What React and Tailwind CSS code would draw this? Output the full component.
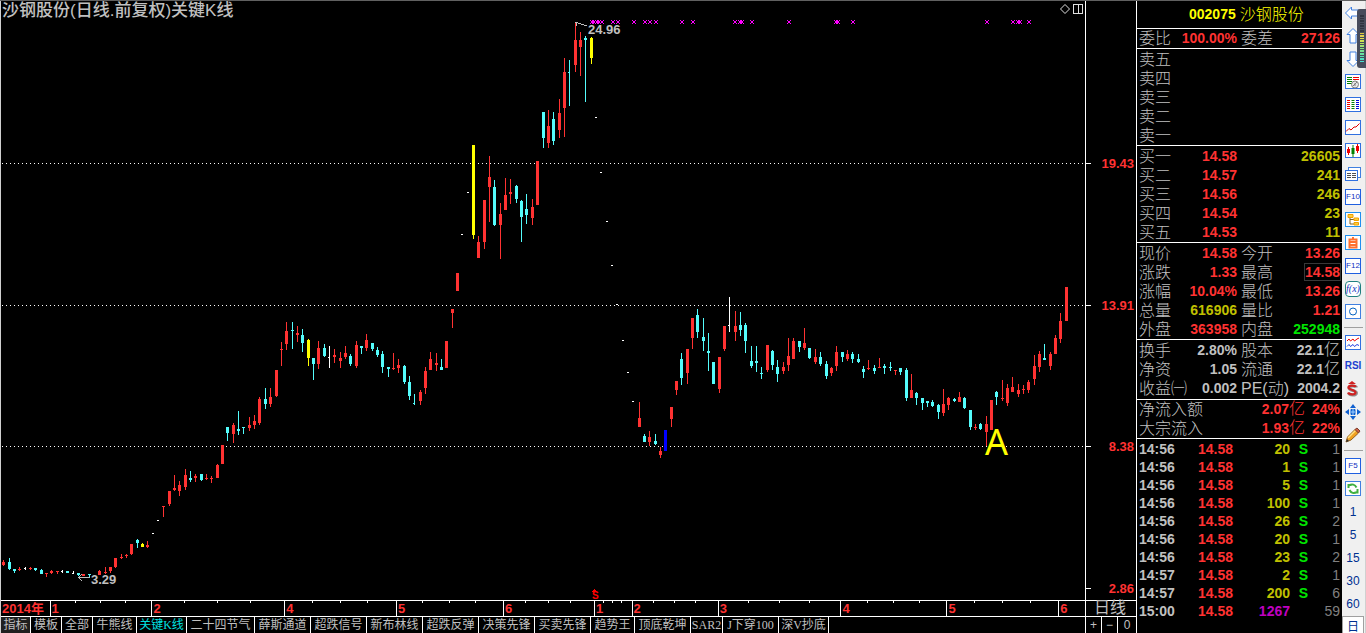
import React, { useState } from 'react';
import clsx from 'clsx';

const PLOT_LEFT = 1;
const PLOT_TOP = 1;
const PLOT_WIDTH = 1084;
const PLOT_HEIGHT = 599;

const COLORS = {
  r: '#ff3232',
  c: '#54fcfc',
  y: '#ffff00',
  w: '#ffffff',
  b: '#0000ff',
};

// x, high, body top, body bottom, low, colour
const CANDLES = [
  [3, 560, 562, 565, 566, 'r'], [9, 558, 562, 569, 570, 'c'], [14, 569, 569, 571, 573, 'c'], [19, 567, 569, 570, 571, 'r'],
  [30, 567, 568, 569, 570, 'r'], [35, 568, 568, 570, 571, 'c'], [41, 569, 570, 574, 574, 'c'], [46, 573, 573, 574, 577, 'r'],
  [51, 570, 571, 573, 574, 'r'], [57, 571, 571, 572, 574, 'r'], [67, 571, 571, 573, 573, 'c'], [78, 573, 573, 575, 576, 'c'],
  [83, 574, 574, 576, 576, 'r'], [89, 574, 574, 575, 577, 'c'], [99, 570, 571, 575, 575, 'r'], [105, 567, 572, 573, 574, 'r'],
  [110, 567, 567, 571, 573, 'r'], [115, 558, 558, 567, 568, 'r'], [121, 554, 557, 558, 559, 'r'], [126, 554, 555, 556, 558, 'r'],
  [131, 544, 544, 554, 555, 'r'], [137, 539, 540, 543, 548, 'c'], [142, 543, 544, 547, 547, 'y'], [147, 541, 545, 547, 548, 'r'],
  [163, 506, 506, 507, 517, 'r'], [169, 491, 491, 504, 506, 'r'], [174, 475, 488, 490, 491, 'r'], [179, 481, 485, 491, 496, 'r'],
  [185, 469, 475, 487, 490, 'r'], [190, 471, 478, 480, 482, 'c'], [195, 474, 476, 478, 482, 'r'], [201, 474, 474, 480, 481, 'c'],
  [206, 474, 478, 479, 480, 'r'], [211, 476, 478, 479, 483, 'r'], [217, 464, 465, 478, 478, 'r'], [222, 445, 445, 464, 464, 'r'],
  [227, 427, 427, 433, 441, 'c'], [233, 423, 425, 434, 443, 'r'], [238, 411, 429, 431, 435, 'c'], [243, 427, 427, 428, 434, 'c'],
  [249, 417, 425, 428, 431, 'r'], [254, 415, 421, 425, 429, 'r'], [259, 397, 399, 423, 425, 'r'], [265, 388, 399, 404, 409, 'c'],
  [270, 388, 397, 404, 407, 'r'], [276, 370, 370, 396, 397, 'r'], [281, 342, 349, 350, 366, 'r'], [286, 322, 331, 344, 350, 'r'],
  [292, 322, 330, 331, 349, 'c'], [297, 326, 333, 335, 342, 'r'], [302, 329, 335, 343, 352, 'c'], [308, 339, 340, 358, 366, 'y'],
  [313, 358, 358, 364, 380, 'c'], [318, 341, 348, 364, 369, 'r'], [324, 344, 348, 356, 357, 'c'], [334, 349, 355, 357, 363, 'r'],
  [340, 352, 358, 361, 368, 'r'], [345, 346, 353, 357, 359, 'r'], [350, 354, 356, 364, 366, 'c'], [356, 341, 345, 366, 368, 'r'],
  [361, 346, 346, 348, 354, 'c'], [366, 334, 340, 348, 351, 'r'], [372, 343, 343, 349, 351, 'c'], [377, 347, 350, 355, 357, 'c'],
  [382, 351, 354, 367, 373, 'c'], [388, 367, 367, 369, 377, 'c'], [393, 353, 368, 369, 370, 'r'], [398, 359, 365, 368, 373, 'r'],
  [404, 365, 366, 382, 384, 'c'], [409, 376, 382, 396, 400, 'c'], [420, 390, 392, 401, 405, 'r'], [425, 367, 371, 388, 394, 'r'],
  [430, 352, 359, 370, 370, 'r'], [436, 353, 363, 365, 371, 'r'], [441, 359, 367, 370, 370, 'c'], [446, 341, 341, 368, 368, 'r'],
  [452, 309, 309, 313, 328, 'r'], [457, 273, 273, 291, 291, 'r'], [473, 145, 145, 235, 239, 'y'], [478, 236, 242, 258, 258, 'r'],
  [484, 200, 200, 242, 249, 'r'], [489, 156, 177, 187, 222, 'r'], [494, 180, 187, 225, 226, 'c'], [500, 203, 214, 225, 259, 'r'],
  [505, 178, 195, 210, 210, 'r'], [510, 179, 192, 194, 204, 'r'], [516, 185, 186, 199, 203, 'c'], [521, 200, 201, 217, 242, 'c'],
  [526, 194, 209, 215, 224, 'c'], [532, 199, 207, 218, 225, 'r'], [537, 161, 161, 205, 205, 'r'], [543, 112, 112, 138, 148, 'c'],
  [548, 110, 126, 143, 148, 'r'], [553, 112, 119, 141, 145, 'c'], [559, 99, 113, 130, 138, 'r'], [564, 58, 72, 108, 137, 'r'],
  [575, 22, 40, 65, 72, 'r'], [580, 32, 40, 47, 76, 'r'], [585, 36, 38, 40, 102, 'c'], [591, 37, 38, 58, 64, 'y'],
  [639, 402, 418, 427, 427, 'r'], [644, 434, 436, 442, 442, 'c'], [649, 431, 437, 442, 446, 'r'], [655, 434, 441, 444, 445, 'c'],
  [660, 447, 451, 455, 458, 'r'], [665, 430, 430, 451, 451, 'b'], [671, 407, 407, 419, 427, 'r'], [676, 381, 381, 390, 395, 'r'],
  [681, 353, 359, 378, 385, 'c'], [687, 349, 349, 373, 384, 'r'], [692, 318, 318, 338, 349, 'r'], [697, 309, 315, 332, 338, 'c'],
  [703, 318, 337, 341, 351, 'c'], [708, 333, 351, 353, 371, 'c'], [713, 362, 362, 384, 384, 'c'], [719, 357, 357, 389, 393, 'r'],
  [724, 326, 326, 349, 351, 'r'], [735, 311, 326, 332, 341, 'r'], [740, 312, 325, 330, 336, 'c'], [745, 323, 325, 341, 353, 'c'],
  [751, 346, 361, 366, 368, 'c'], [756, 346, 361, 363, 372, 'c'], [761, 367, 373, 374, 379, 'c'], [767, 345, 345, 370, 372, 'r'],
  [772, 350, 351, 365, 370, 'c'], [777, 360, 367, 374, 382, 'c'], [783, 362, 367, 371, 374, 'r'], [788, 338, 356, 365, 371, 'r'],
  [793, 338, 341, 359, 359, 'r'], [799, 341, 341, 347, 352, 'c'], [804, 328, 343, 348, 350, 'r'], [809, 348, 348, 358, 359, 'c'],
  [815, 349, 357, 362, 364, 'r'], [820, 352, 357, 364, 366, 'c'], [826, 361, 364, 376, 379, 'c'], [831, 367, 368, 373, 376, 'r'],
  [836, 346, 352, 366, 371, 'r'], [842, 352, 352, 357, 362, 'c'], [847, 350, 354, 359, 361, 'r'], [852, 352, 354, 359, 363, 'c'],
  [858, 354, 359, 362, 363, 'c'], [863, 366, 369, 372, 378, 'c'], [868, 360, 368, 369, 370, 'r'], [874, 365, 368, 371, 374, 'c'],
  [879, 358, 367, 368, 368, 'r'], [884, 364, 366, 368, 374, 'c'], [890, 362, 367, 368, 371, 'c'], [895, 370, 370, 371, 375, 'r'],
  [900, 368, 368, 372, 375, 'c'], [906, 368, 370, 398, 401, 'c'], [911, 374, 390, 398, 398, 'r'], [916, 392, 393, 398, 405, 'c'],
  [922, 398, 398, 403, 410, 'c'], [927, 401, 401, 403, 407, 'c'], [932, 400, 402, 406, 407, 'c'], [938, 404, 405, 412, 419, 'c'],
  [943, 389, 404, 413, 416, 'r'], [948, 397, 398, 405, 410, 'r'], [954, 398, 399, 401, 402, 'c'], [959, 392, 397, 402, 402, 'r'],
  [964, 397, 398, 408, 409, 'c'], [970, 410, 410, 427, 430, 'c'], [975, 424, 427, 428, 430, 'r'], [980, 423, 424, 429, 430, 'c'],
  [986, 416, 424, 432, 446, 'r'], [991, 400, 400, 430, 430, 'r'], [996, 391, 392, 397, 405, 'c'], [1002, 380, 398, 399, 401, 'r'],
  [1007, 384, 388, 403, 406, 'r'], [1012, 377, 387, 392, 392, 'r'], [1018, 384, 390, 394, 397, 'r'], [1023, 385, 389, 390, 394, 'r'],
  [1028, 380, 382, 390, 393, 'r'], [1034, 355, 366, 379, 385, 'r'], [1039, 351, 354, 367, 372, 'r'], [1044, 344, 358, 360, 360, 'c'],
  [1050, 352, 354, 366, 370, 'r'], [1055, 335, 338, 354, 354, 'r'], [1060, 313, 321, 339, 343, 'r'], [1066, 287, 287, 321, 321, 'r'],
];

// days that closed at the open: a wick with a tick on its left (x, high, close, low, colour)
const DOJI = [
  [25, 567, 568, 570, 'w'], [62, 570, 571, 573, 'w'], [73, 571, 573, 574, 'w'], [329, 346, 357, 368, 'w'],
  [414, 394, 403, 405, 'c'], [569, 60, 72, 106, 'c'], [729, 297, 325, 332, 'w'],
];

// limit days with a single price
const DASHES = [
  [153, 533], [158, 520], [462, 234], [468, 192], [596, 117], [601, 172], [607, 221], [612, 265],
  [617, 304], [623, 340], [628, 372], [633, 401],
];

const CROSSES = [
  592, 594, 597, 599, 602, 613, 618, 634, 645, 650, 656, 682, 693, 735, 740, 742, 752, 789,
  836, 838, 853, 987, 1013, 1018, 1020, 1029,
];

const GRID_LINES = [163, 305, 446];

const NOTES = [
  { text: '24.96', x: 588, y: 22, className: 'text-[13px] leading-4 font-bold text-[#c0c0c0]' },
  { text: '3.29', x: 91, y: 572, className: 'text-[13px] leading-4 font-bold text-[#c0c0c0]' },
  { text: 'S', x: 592, y: 591, className: 'text-[10px] leading-[10px] font-bold text-[#ff0000]' },
  { text: 'A', x: 985, y: 422, className: "font-['Noto_Sans'] text-[36px] leading-10 text-[#ffff00]" },
];

const PRICE_BANDS = [
  { label: '19.43', size: 163 },
  { label: '13.91', size: 142 },
  { label: '8.38', size: 141 },
  { label: '2.86', size: 142 },
];

const MONTHS = [
  { label: '2014年', size: 49, first: true },
  { label: '1', size: 102, ticks: true },
  { label: '2', size: 133, ticks: true },
  { label: '4', size: 112, ticks: true },
  { label: '5', size: 107, ticks: true },
  { label: '6', size: 91, ticks: true },
  { label: '1', size: 37, ticks: true },
  { label: '2', size: 86, ticks: true },
  { label: '3', size: 123, ticks: true },
  { label: '4', size: 106, ticks: true },
  { label: '5', size: 112, ticks: true },
  { label: '6', size: 26 },
];

const TABS = [
  ['指标', 'w-[30px] bg-[#202020]'],
  ['模板', 'w-[31px]'],
  ['全部', 'w-[31px]'],
  ['牛熊线', 'w-[44px]'],
  ['关键K线', 'w-[50px]'],
  ['二十四节气', 'w-[68px]'],
  ['薛斯通道', 'w-[56px]'],
  ['超跌信号', 'w-[56px]'],
  ['新布林线', 'w-[56px]'],
  ['超跌反弹', 'w-[56px]'],
  ['决策先锋', 'w-[56px]'],
  ['买卖先锋', 'w-[56px]'],
  ['趋势王', 'w-[44px]'],
  ['顶底乾坤', 'w-[56px]'],
  ['SAR2', 'w-[32px]'],
  ['J下穿100', 'w-[56px]'],
  ['深V抄底', 'w-[50px]'],
];

const SELLS = ['卖五', '卖四', '卖三', '卖二', '卖一'];

const BUYS = [
  ['买一', '14.58', '26605'],
  ['买二', '14.57', '241'],
  ['买三', '14.56', '246'],
  ['买四', '14.54', '23'],
  ['买五', '14.53', '11'],
];

const RED = 'text-[#ff3232]';
const GRAY = 'text-[#c0c0c0]';
const OLIVE = 'text-[#c0c000]';
const GREEN = 'text-[#00e600]';

const ORDER_RATIO = [['委比', '100.00%', RED, '委差', '27126', RED]];

const PRICES = [
  ['现价', '14.58', RED, '今开', '13.26', RED],
  ['涨跌', '1.33', RED, '最高', '14.58', RED, true],
  ['涨幅', '10.04%', RED, '最低', '13.26', RED],
  ['总量', '616906', OLIVE, '量比', '1.21', RED],
  ['外盘', '363958', RED, '内盘', '252948', GREEN],
];

const FUNDAMENTALS = [
  ['换手', '2.80%', GRAY, '股本', '22.1亿', GRAY],
  ['净资', '1.05', GRAY, '流通', '22.1亿', GRAY],
  ['收益㈠', '0.002', GRAY, 'PE(动)', '2004.2', GRAY],
];

const FLOWS = [
  ['净流入额', '2.07亿', '24%'],
  ['大宗流入', '1.93亿', '22%'],
];

const TRADES = [
  ['14:56', '14.58', '20', 'S', '1'],
  ['14:56', '14.58', '1', 'S', '1'],
  ['14:56', '14.58', '5', 'S', '1'],
  ['14:56', '14.58', '100', 'S', '1'],
  ['14:56', '14.58', '26', 'S', '2'],
  ['14:56', '14.58', '20', 'S', '1'],
  ['14:56', '14.58', '23', 'S', '2'],
  ['14:57', '14.58', '2', 'S', '1'],
  ['14:57', '14.58', '200', 'S', '6'],
  ['15:00', '14.58', '1267', '', '59'],
];

const CandleChart = () => (
  <svg
    className="block min-h-0 w-full flex-1"
    viewBox={`${PLOT_LEFT} ${PLOT_TOP} ${PLOT_WIDTH} ${PLOT_HEIGHT}`}
    preserveAspectRatio="none"
    shapeRendering="crispEdges"
  >
    {GRID_LINES.map((y) => (
      <line key={y} x1="2" x2="1085" y1={y + 0.5} y2={y + 0.5} stroke="#fff" strokeDasharray="1 3" />
    ))}
    {CANDLES.map(([x, high, top, bottom, low, color]) => (
      <g key={x} fill={COLORS[color]}>
        <rect x={x} y={high} width="1" height={low - high} />
        <rect x={x - 1} y={top} width="3" height={bottom - top} />
      </g>
    ))}
    {DOJI.map(([x, high, close, low, color]) => (
      <g key={x} fill={COLORS[color]}>
        <rect x={x} y={high} width="1" height={low - high} />
        <rect x={x - 1} y={close} width="1" height="1" />
      </g>
    ))}
    {DASHES.map(([x, y]) => (
      <rect key={x} x={x - 1} y={y} width="2" height="1" fill="#fff" />
    ))}
    {CROSSES.map((x) => (
      <path
        key={x}
        d={`M${x - 2} 20h1v1h-1z m3 0h1v1h-1z m-2 1h2v2h-2z m-1 2h1v1h-1z m3 0h1v1h-1z`}
        fill="#ff00ff"
      />
    ))}
    <path d="M575 22.5h3M576.5 23v3M578 23.5h3M581 24.5h3M584 25.5h3" stroke="#c0c0c0" fill="none" />
    <path d="M78 577.5h12M79.5 576v3M80.5 575v1M80.5 579v1M81.5 580v1M81.5 574v1" stroke="#c0c0c0" fill="none" />
    <path d="M594 589h1v1h1v1h1v1h-5v-1h1v-1h1z" fill="#ff0000" />
  </svg>
);

const Plot = () => (
  <div className="relative flex min-w-0 flex-1 flex-col">
    <CandleChart />
    <div className="absolute inset-x-0 top-0 flex items-start justify-between pr-px">
      <h1 className="pl-px text-[17px] leading-5 font-medium text-[#c0c0c0]">沙钢股份(日线.前复权)关键K线</h1>
      <svg className="mt-[2px] h-[12px] w-[26px]" viewBox="0 0 26 12" fill="none" stroke="#e0e0e0">
        <path d="M7 1.5L11.5 6L7 10.5L2.5 6z" />
        <path d="M15.500 1.500h9v9h-9zM20.500 1.500v9" shapeRendering="crispEdges" />
      </svg>
    </div>
    {NOTES.map((note) => (
      <span
        key={note.text}
        className={clsx('absolute', note.className)}
        style={{
          left: `${((note.x - PLOT_LEFT) / PLOT_WIDTH) * 100}%`,
          top: `${((note.y - PLOT_TOP) / PLOT_HEIGHT) * 100}%`,
        }}
      >
        {note.text}
      </span>
    ))}
  </div>
);

const PriceAxis = () => (
  <div className="flex w-[51px] shrink-0 flex-col border-l border-white">
    {PRICE_BANDS.map((band) => (
      <div key={band.label} className="flex basis-0 items-end justify-between pr-[2px]" style={{ flexGrow: band.size }}>
        <span className="h-px w-[5px] bg-white" />
        <span className="-mb-2 text-[13px] leading-4 font-bold text-[#ff3232]">{band.label}</span>
      </div>
    ))}
    <div className="grow-[11] basis-0" />
  </div>
);

const TimeAxis = () => (
  <div className="flex h-4 shrink-0 border-t border-white">
    <div className="flex min-w-0 flex-1">
      {MONTHS.map((month, i) => (
        <div
          key={i}
          className={clsx('relative flex basis-0', !month.first && 'border-l border-white')}
          style={{ flexGrow: month.size }}
        >
          {month.ticks && (
            <div className="grid h-[2px] w-full grid-cols-4 divide-x divide-white">
              <i />
              <i />
              <i />
              <i />
            </div>
          )}
          <span className="absolute top-0 left-0 pl-px text-[13px] leading-4 font-bold whitespace-nowrap text-[#ff3232]">
            {month.label}
          </span>
        </div>
      ))}
    </div>
    <div className="w-[51px] shrink-0 border-l border-white pl-2 text-base leading-[14px] text-[#c0c0c0]">日线</div>
  </div>
);

const IndicatorTabs = () => {
  const [active, setActive] = useState('关键K线');

  return (
    <div className="flex h-[17px] shrink-0 border-t border-white text-[12px] leading-4">
      <div className="flex min-w-0 flex-1 overflow-hidden font-['Liberation_Serif','Noto_Sans_CJK_SC',serif]">
        {TABS.map(([label, width]) => (
          <button
            key={label}
            onClick={() => setActive(label)}
            className={clsx(
              'shrink-0 border-r border-white text-center whitespace-nowrap',
              width,
              active === label ? 'text-[#00e0e0]' : 'text-[#c0c0c0]'
            )}
          >
            {label}
          </button>
        ))}
      </div>
      <div className="grid w-[51px] shrink-0 grid-cols-[16px_16px_1fr] divide-x divide-white border-l border-white text-[#c0c0c0]">
        <button>+</button>
        <button>−</button>
        <button>0</button>
      </div>
    </div>
  );
};

const Value = ({ text }) =>
  text.endsWith('亿') ? (
    <>
      {text.slice(0, -1)}
      <span className="text-base leading-4 font-light">亿</span>
    </>
  ) : (
    text
  );

const label = 'p-0 text-left text-base leading-[19px] font-light whitespace-nowrap text-[#c0c0c0]';
const value = 'p-0 text-right text-[14px] leading-[19px] font-bold whitespace-nowrap';

const PairTable = ({ rows }) => (
  <table className="w-full table-fixed border-collapse">
    <tbody>
      {rows.map(([name, amount, color, name2, amount2, color2, boxed]) => (
        <tr key={name} className="h-[19px]">
          <th className={clsx(label, 'w-[38px]')}>{name}</th>
          <td className={clsx(value, color, 'w-[60px]')}>{amount}</td>
          <th className={clsx(label, 'w-[48px] pl-1')}>{name2}</th>
          <td className={clsx(value, color2)}>
            {boxed ? (
              <span className="outline outline-[#383838]">{amount2}</span>
            ) : (
              <Value text={amount2} />
            )}
          </td>
        </tr>
      ))}
    </tbody>
  </table>
);

const QuotePanel = () => (
  <aside className="w-[206px] shrink-0 divide-y divide-white border-l border-white *:px-[2px]">
    <h2 className="flex h-7 items-center gap-1 text-[#ffff00]">
      <span className="pl-[50px] text-[14px] font-bold">002075</span>
      <span className="text-base font-light">沙钢股份</span>
    </h2>
    <div>
      <PairTable rows={ORDER_RATIO} />
    </div>
    <div className="pt-px">
      <table className="w-full border-collapse">
        <tbody>
          {SELLS.map((name) => (
            <tr key={name} className="h-[19px]">
              <th className={label}>{name}</th>
            </tr>
          ))}
        </tbody>
      </table>
    </div>
    <div className="pt-px">
      <table className="w-full table-fixed border-collapse">
        <tbody>
          {BUYS.map(([name, price, volume]) => (
            <tr key={name} className="h-[19px]">
              <th className={clsx(label, 'w-[38px]')}>{name}</th>
              <td className={clsx(value, RED, 'w-[60px]')}>{price}</td>
              <td className={clsx(value, OLIVE)}>{volume}</td>
            </tr>
          ))}
        </tbody>
      </table>
    </div>
    <div className="pt-px">
      <PairTable rows={PRICES} />
    </div>
    <div className="py-px">
      <PairTable rows={FUNDAMENTALS} />
    </div>
    <div>
      <table className="w-full table-fixed border-collapse">
        <tbody>
          {FLOWS.map(([name, amount, percent]) => (
            <tr key={name} className="h-[19px]">
              <th className={clsx(label, 'w-[100px]')}>{name}</th>
              <td className={clsx(value, RED, 'w-[66px]')}>
                <Value text={amount} />
              </td>
              <td className={clsx(value, RED)}>{percent}</td>
            </tr>
          ))}
        </tbody>
      </table>
    </div>
    <div className="pt-px">
      <table className="w-full table-fixed border-collapse text-right text-[14px] leading-[18px] font-bold">
        <tbody>
          {TRADES.map(([time, price, volume, side, count], i) => (
            <tr key={i} className="h-[18px]">
              <td className="w-[44px] p-0 text-left text-[#c0c0c0]">{time}</td>
              <td className="w-[50px] p-0 text-[#ff3232]">{price}</td>
              <td className={clsx('w-[57px] p-0', side ? OLIVE : 'text-[#c000c0]')}>{volume}</td>
              <td className="w-[18px] p-0 text-[#00e600]">{side}</td>
              <td className="p-0 font-normal text-[#808080]">{count}</td>
            </tr>
          ))}
        </tbody>
      </table>
    </div>
  </aside>
);

const Icon = ({ children, frame }) => (
  <svg className="h-4 w-4" viewBox="0 0 16 16" fill="none">
    {frame && <rect x="0.5" y="0.5" width="15" height="14" fill="#fff" stroke={frame} />}
    {children}
  </svg>
);

const Boxed = ({ children }) => (
  <span className="flex h-4 w-4 items-center justify-center border border-[#2060e0] bg-white text-[8px] leading-3 font-medium text-[#1030c0]">
    {children}
  </span>
);

const TOOLS = [
  { name: '后退', icon: <Icon><path d="M0.500 8L6.500 2V5H15V11H6.500V14z" fill="#fff" stroke="#4080e0" /></Icon> },
  { name: '上翻', icon: <Icon><path d="M8 0.500L14 6.500H11V15H5V6.500H2z" fill="#fff" stroke="#4080e0" /></Icon> },
  { name: '下翻', icon: <Icon><path d="M8 15.500L2 9.500H5V1H11V9.500H14z" fill="#fff" stroke="#4080e0" /></Icon> },
  {
    name: '报价',
    icon: (
      <Icon frame="#3070e0">
        <path d="M2 3.500h5M2 5.500h5M2 7.500h5M2 9.500h5" stroke="#008000" />
        <path d="M8 3.500h6M8 5.500h6" stroke="#f00000" />
        <circle cx="10" cy="10.500" r="3.500" fill="#e8e8e8" stroke="#808080" />
        <path d="M8 12l4-4M10 9v3" stroke="#808080" />
      </Icon>
    ),
  },
  {
    name: '列表',
    icon: (
      <Icon frame="#3070e0">
        <path d="M2 3.500h3M2 5.500h3M2 7.500h3M2 9.500h3M2 11.500h3" stroke="#f00000" />
        <path d="M6.500 3.500h3M6.500 5.500h3M6.500 7.500h3M6.500 9.500h3M6.500 11.500h3" stroke="#008000" />
        <path d="M11 3.500h3M11 5.500h3M11 7.500h3M11 9.500h3M11 11.500h3" stroke="#0000e0" />
      </Icon>
    ),
  },
  { name: '分时', icon: <Icon frame="#3070e0"><path d="M1 11.500L4 8.500L6 10L9 7H11L14.500 3.500" stroke="#e00000" /></Icon> },
  {
    name: 'K线',
    icon: (
      <Icon frame="#3070e0">
        <path d="M3.500 4v8M12.500 1v9" stroke="#f00000" />
        <path d="M2 6h3v4H2zM11 3h3v5h-3z" fill="#f00000" />
        <path d="M8 2v12" stroke="#008000" />
        <path d="M6.500 5h3v6h-3z" fill="#008000" />
      </Icon>
    ),
  },
  {
    name: '资讯',
    icon: (
      <Icon>
        <rect x="3.500" y="1.500" width="12" height="10" fill="#fff" stroke="#4080e0" />
        <rect x="0.500" y="4.500" width="12" height="10" fill="#fff" stroke="#3070e0" />
        <path d="M2 7.500h4M7 7.500h4M2 9.500h4M7 9.500h4M2 11.500h4M7 11.500h4" stroke="#505050" />
      </Icon>
    ),
  },
  { name: 'F10', icon: <Boxed>F10</Boxed> },
  {
    name: '板块',
    icon: (
      <Icon frame="#2090f0">
        <path d="M5 5v7h4M5 7.500h4" stroke="#806020" />
        <path d="M3 2.500h5v3H3zM9 6h4.500v2.500H9zM9 10.500h4.500V13H9z" fill="#ffd040" stroke="#f0a000" />
      </Icon>
    ),
  },
  {
    name: '自选',
    icon: (
      <Icon frame="#2090f0">
        <path d="M4.500 4.500h7v8h-7zM4.500 7h7M4.500 10h7M8 2v2" stroke="#ff7030" strokeWidth="2" />
      </Icon>
    ),
  },
  { name: 'F12', icon: <Boxed>F12</Boxed> },
  {
    name: '公式',
    icon: (
      <span className="flex h-4 w-4 items-center justify-center rounded-[4px] border border-[#208080] bg-white font-['Liberation_Serif',serif] text-[10px] leading-3 text-[#1030c0] italic">
        f(x)
      </span>
    ),
  },
  { name: '圆', icon: <Icon frame="#4080e0"><circle cx="8" cy="7.500" r="3.500" stroke="#0060c0" /></Icon> },
  null,
  {
    name: '叠加',
    icon: (
      <Icon frame="#3070e0">
        <path d="M2 6l2-2 1.500 2L8 4l1.500 2L12 4l2-1" stroke="#f00000" />
        <path d="M2 11.500l2-2 1.500 2L8 9.500l1.500 2L12 9.500l2 1" stroke="#2040e0" />
      </Icon>
    ),
  },
  { name: 'RSI', icon: <span className="text-[10px] font-bold text-[#2040d0]">RSI</span> },
  {
    name: '买卖点',
    icon: (
      <Icon>
        <path d="M7 0l4 3H3z" fill="#d02020" />
        <path d="M11.500 6.500C11 4.500 4 4 4 7s7.500 2 7.500 5-7 2.500-8 0" stroke="#909090" strokeWidth="3" />
        <path d="M10.500 6C10 4 3.500 4 3.500 6.500s7 2 7 5-6.500 2-7.500 0" stroke="#d02020" strokeWidth="2.200" />
      </Icon>
    ),
  },
  {
    name: '移动',
    icon: (
      <Icon>
        <path d="M8 0l3 4H5zM8 16l3-4H5zM0 8l4-3v6zM16 8l-4-3v6z" fill="#1060d0" />
        <path d="M6 5.500h4v5H6zM5 8h6" fill="#1060d0" stroke="#1060d0" />
        <path d="M8 5v6M5 8h6" stroke="#a0d0ff" />
      </Icon>
    ),
  },
  {
    name: '画线',
    icon: (
      <Icon>
        <path d="M1 15l1.500-5L10 2.500l3.500 3.500L6 13z" fill="#f0a020" stroke="#906020" />
        <path d="M3 11l7.500-7.500" stroke="#ffe080" strokeWidth="1.500" />
        <path d="M10 2.500L12 1l3 3-1.500 2z" fill="#d06040" stroke="#804030" />
        <path d="M1 15l1-3 2 2z" fill="#303030" />
      </Icon>
    ),
  },
  null,
  { name: 'F5', icon: <Boxed>F5</Boxed> },
  {
    name: '刷新',
    icon: (
      <Icon frame="#4080e0">
        <path d="M3.500 7V4h3M4 4.500c3-2 6-1 7.500 2M12.500 8v3.500h-3M12 11c-3 2-6 1-7.500-2" stroke="#40b040" strokeWidth="2" />
      </Icon>
    ),
  },
  { name: '1' },
  { name: '5' },
  { name: '15' },
  { name: '30' },
  { name: '60' },
];

const METER = [
  ...Array(7).fill('bg-[#303440]'),
  'bg-[#e0c840]', 'bg-[#e0d050]', 'bg-[#e0e050]', 'bg-[#d0e050]', 'bg-[#b8e060]', 'bg-[#a0e070]', 'bg-[#88e080]',
  'bg-[#78e090]', 'bg-[#68e0a0]', 'bg-[#58e0b0]', 'bg-[#50e0c0]', 'bg-[#48e0d0]',
];

const Toolbar = () => (
  <nav className="relative flex w-6 shrink-0 flex-col border-r border-[#d0d0d0] bg-[#f0f0f0]">
    {TOOLS.map((tool, i) =>
      tool ? (
        <button
          key={tool.name}
          aria-label={tool.name}
          className="flex h-[23px] w-[22px] shrink-0 items-center justify-center text-[12px] text-[#003090]"
        >
          {tool.icon || tool.name}
        </button>
      ) : (
        <hr key={i} className="mx-[2px] mt-1 mb-[3px] border-[#a0a0a0]" />
      )
    )}
    <button className="mt-px h-[17px] w-[22px] shrink-0 border border-b-0 border-[#a0a0a0] bg-white text-[12px] leading-5 text-[#003090]">
      日
    </button>
    <div className="absolute top-2 right-[-1px] flex h-[59px] w-[9px] flex-col gap-px rounded-l-[3px] bg-[#484c5c] py-[6px] pr-[2px] pl-[3px]">
      {METER.map((color, i) => (
        <i key={i} className={clsx('min-h-px flex-1', color)} />
      ))}
    </div>
  </nav>
);

const App = () => (
  <div className="flex h-screen overflow-hidden border-t border-[#606060] bg-black font-['Liberation_Sans','Noto_Sans_CJK_SC',sans-serif]">
    <main className="flex min-w-0 flex-1 flex-col border-l border-[#d0d0d0]">
      <div className="flex min-h-0 flex-1">
        <Plot />
        <PriceAxis />
      </div>
      <TimeAxis />
      <IndicatorTabs />
    </main>
    <QuotePanel />
    <Toolbar />
  </div>
);

export default App;
